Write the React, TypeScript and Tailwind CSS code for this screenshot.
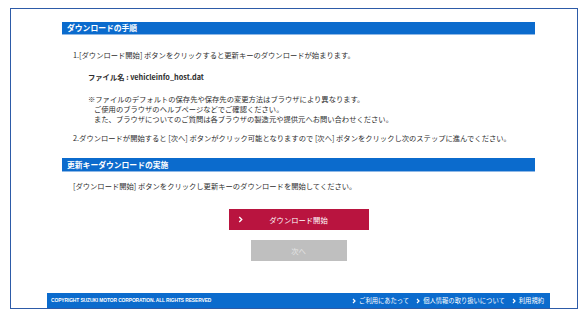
import React from 'react';

const jp = { fontFamily: '"Noto Sans CJK JP", "Liberation Sans", sans-serif' };

function SectionTitle({ title, className }: { title: string; className?: string }) {
  return (
    <div
      className={[
        'flex items-center w-[473px] bg-[#0b6bcd] pl-[5px] text-white font-bold text-[7.8px] border-b border-[#8fb8e6]',
        className ?? '',
      ].join(' ')}
    >
      {title}
    </div>
  );
}

function Chevron({ size = 5, stroke = 1.6 }: { size?: number; stroke?: number }) {
  return (
    <svg width={size} height={size + 2} viewBox="0 0 6 8" className="shrink-0">
      <polyline points="1.5,1 4.5,4 1.5,7" fill="none" stroke="white" strokeWidth={stroke} />
    </svg>
  );
}

const links = ['ご利用にあたって', '個人情報の取り扱いについて', '利用規約'];

export default function App() {
  return (
    <div className="w-[587px] h-[318px] bg-white pt-[8px] pl-[10px]" style={jp}>
      <div className="w-[568px] h-[301px] border border-[#2d5ba8] flex flex-col text-[#2e2e2e] text-[7.3px] leading-[10px]">
        <div className="pl-[51px]">
          <SectionTitle title="ダウンロードの手順" className="mt-[13px] h-[13px]" />

          <p className="mt-[15px] pl-[11px]">
            1.[ダウンロード開始] ボタンをクリックすると更新キーのダウンロードが始まります。
          </p>
          <p className="mt-[12px] pl-[26px] font-bold text-[7.3px]">
            ファイル名 : vehicleinfo_host.dat
          </p>
          <div className="mt-[12px] pl-[26px]">
            <p>※ファイルのデフォルトの保存先や保存先の変更方法はブラウザにより異なります。</p>
            <p className="pl-[6px]">ご使用のブラウザのヘルプページなどでご確認ください。</p>
            <p className="pl-[6px]">また、ブラウザについてのご質問は各ブラウザの製造元や提供元へお問い合わせください。</p>
          </div>
          <p className="mt-[9px] pl-[11px]">
            2.ダウンロードが開始すると [次へ] ボタンがクリック可能となりますので [次へ] ボタンをクリックし次のステップに進んでください。
          </p>

          <SectionTitle title="更新キーダウンロードの実施" className="mt-[15px] h-[14px]" />

          <p className="mt-[9px] pl-[11px]">
            [ダウンロード開始] ボタンをクリックし更新キーのダウンロードを開始してください。
          </p>

          <div className="w-[473px] flex flex-col items-center">
            <button className="mt-[18px] relative w-[140px] h-[21px] bg-[#b9143f] text-white text-[7.3px] flex items-center justify-center">
              <span className="absolute left-[9px] top-[7px]">
                <Chevron />
              </span>
              ダウンロード開始
            </button>
            <button className="mt-[10px] w-[96px] h-[21px] bg-[#bfbfbf] text-[#e6e6e6] text-[7.3px] flex items-center justify-center">
              次へ
            </button>
          </div>
        </div>

        <div className="mt-auto ml-[36px] w-[503px] h-[15px] bg-[#0b6bcd] flex items-center justify-between pl-[4px] pr-[6px] text-white">
          <span
            className="text-[4.9px] font-bold tracking-[-0.1px]"
            style={{ fontFamily: '"Liberation Sans", sans-serif' }}
          >
            COPYRIGHT SUZUKI MOTOR CORPORATION. ALL RIGHTS RESERVED
          </span>
          <div className="flex items-center gap-[7px] text-[6.3px]">
            {links.map((l) => (
              <span key={l} className="flex items-center gap-[3px]">
                <Chevron size={4} stroke={1.8} />
                {l}
              </span>
            ))}
          </div>
        </div>
      </div>
    </div>
  );
}
